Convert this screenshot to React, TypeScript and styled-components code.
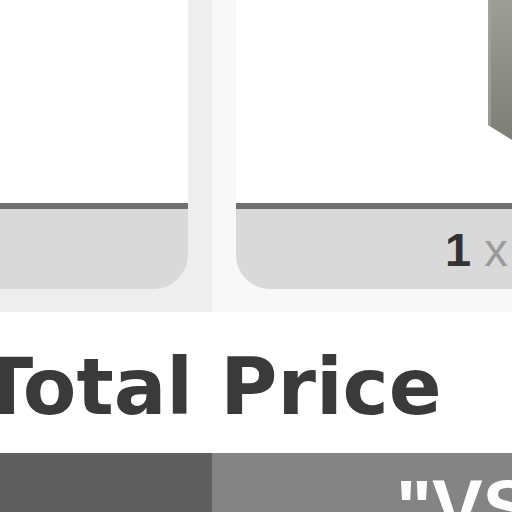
import * as React from 'react';
import styled, { createGlobalStyle } from 'styled-components';

const GlobalStyle = createGlobalStyle`
  html, body {
    margin: 0;
    padding: 0;
    background: #ffffff;
    overflow: hidden;
  }
  body {
    width: 512px;
    height: 512px;
    font-family: "Liberation Sans", Arial, sans-serif;
  }
`;

const Page = styled.div`
  width: 532px;
  margin-left: -20px;
`;

const ProductGrid = styled.div`
  display: grid;
  grid-template-columns: 232px 1fr;
  height: 312px;
`;

const Column = styled.div<{ $bg: string; $side: 'left' | 'right' }>`
  background: ${(p) => p.$bg};
  padding: ${(p) => (p.$side === 'left' ? '0 24px 23px 0' : '0 0 23px 24px')};
  display: flex;
`;

const Card = styled.div<{ $corner: 'left' | 'right' }>`
  flex: 1;
  display: flex;
  flex-direction: column;
  background: #ffffff;
  overflow: hidden;
  border-radius: ${(p) => (p.$corner === 'left' ? '0 0 0 34px' : '0 0 34px 0')};
`;

const ImageArea = styled.div`
  height: 203px;
  display: flex;
  justify-content: flex-end;
  align-items: flex-start;
`;

const Divider = styled.div`
  height: 6px;
  background: #6f6f6f;
`;

const CardFooter = styled.div<{ $indent?: number }>`
  height: 80px;
  background: #d9d9d9;
  display: flex;
  align-items: center;
  padding-left: ${(p) => p.$indent ?? 0}px;
  white-space: nowrap;
  font-family: "Liberation Sans", Arial, sans-serif;
  font-size: 47px;
  line-height: 1;
  overflow: hidden;
`;

const Qty = styled.span`
  font-weight: 700;
  color: #333333;
`;

const Times = styled.span`
  color: #999999;
  margin-left: 13px;
`;

const Heading = styled.h2`
  margin: 0;
  padding: 36px 0 27px 0;
  font-family: "DejaVu Sans", sans-serif;
  font-weight: 700;
  font-size: 78px;
  line-height: 1;
  color: #3a3a3a;
  white-space: nowrap;
  overflow: hidden;
`;

const CompareBar = styled.div`
  display: grid;
  grid-template-columns: 232px 1fr;
  height: 80px;
`;

const BarCell = styled.div<{ $bg: string }>`
  background: ${(p) => p.$bg};
  overflow: hidden;
`;

const BarText = styled.div`
  padding: 16px 0 0 184px;
  font-family: "Liberation Sans", Arial, sans-serif;
  font-weight: 700;
  font-size: 76px;
  line-height: 1;
  color: #ffffff;
  white-space: nowrap;
`;

const BoxImage = () => (
  <svg width="24" height="140" viewBox="0 0 24 140">
    <defs>
      <linearGradient id="boxg" x1="0" y1="0" x2="0" y2="1">
        <stop offset="0" stopColor="#9d9e96" />
        <stop offset="1" stopColor="#7d7e77" />
      </linearGradient>
    </defs>
    <polygon points="0,0 24,0 24,140 0,125" fill="url(#boxg)" />
    <polygon points="0,0 3,0 3,127 0,125" fill="#a9aaa2" opacity="0.6" />
  </svg>
);

export default function App() {
  return (
    <>
      <GlobalStyle />
      <Page>
        <ProductGrid>
          <Column $bg="#eeeeee" $side="left">
            <Card $corner="right">
              <ImageArea />
              <Divider />
              <CardFooter />
            </Card>
          </Column>
          <Column $bg="#f8f8f8" $side="right">
            <Card $corner="left">
              <ImageArea>
                <BoxImage />
              </ImageArea>
              <Divider />
              <CardFooter $indent={209}>
                <Qty>1</Qty>
                <Times>x</Times>
              </CardFooter>
            </Card>
          </Column>
        </ProductGrid>
        <Heading>Total Price</Heading>
        <CompareBar>
          <BarCell $bg="#5f5f5f" />
          <BarCell $bg="#848484">
            <BarText>"VS</BarText>
          </BarCell>
        </CompareBar>
      </Page>
    </>
  );
}
